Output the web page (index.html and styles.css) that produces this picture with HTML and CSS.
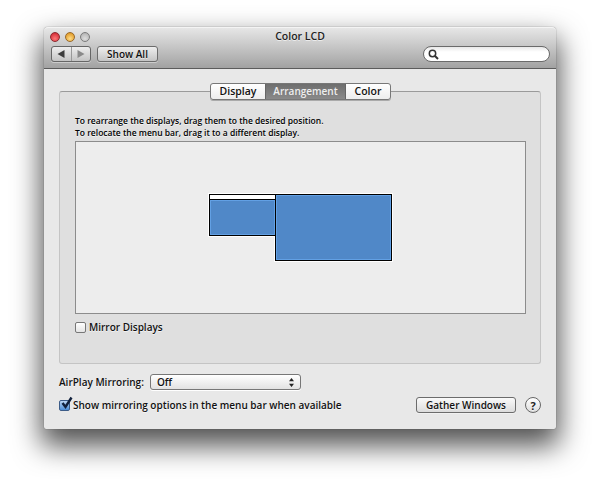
FILE: index.html
```html
<!DOCTYPE html>
<html lang="en">
<head>
<meta charset="utf-8">
<title>Color LCD</title>
<link rel="stylesheet" href="styles.css">
</head>
<body>
<div class="window">
  <header class="titlebar">
    <div class="title-row">
      <div class="lights"><span class="light red"></span><span class="light yellow"></span><span class="light grey"></span></div>
      <div class="title">Color LCD</div>
    </div>
    <div class="toolbar">
      <div class="nav">
        <span class="nav-btn"><svg width="10" height="10" viewBox="0 0 10 10"><path d="M8.5 1V9L1.5 5Z" fill="#3c3c3c"/></svg></span>
        <span class="nav-btn"><svg width="10" height="10" viewBox="0 0 10 10"><path d="M1.5 1V9L8.5 5Z" fill="#8a8a8a"/></svg></span>
      </div>
      <div class="btn showall">Show All</div>
      <div class="search"><svg width="11" height="11" viewBox="0 0 11 11"><circle cx="4.5" cy="4.5" r="3.2" fill="none" stroke="#333" stroke-width="1.5"/><path d="M7 7L10 10" stroke="#333" stroke-width="2"/></svg></div>
    </div>
  </header>
  <main class="content">
    <div class="tabs-wrap">
      <div class="tabs">
        <span class="tab first">Display</span><span class="tab active">Arrangement</span><span class="tab last">Color</span>
      </div>
    </div>
    <section class="panel">
      <p class="hint">To rearrange the displays, drag them to the desired position.<br>To relocate the menu bar, drag it to a different display.</p>
      <div class="arrange">
        <div class="monitors">
          <div class="mon small"><div class="menubar"></div><div class="screen"></div></div>
          <div class="mon large"><div class="screen"></div></div>
        </div>
      </div>
      <label class="check-row mirror"><span class="check"></span>Mirror Displays</label>
    </section>
    <div class="airplay">
      <span class="label">AirPlay Mirroring:</span>
      <div class="select"><span>Off</span><svg width="7" height="11" viewBox="0 0 7 11"><path d="M3.5 1L6 4.2H1Z M3.5 10L6 6.8H1Z" fill="#222"/></svg></div>
    </div>
    <div class="bottom">
      <label class="check-row"><span class="check on"><svg width="15" height="15" viewBox="0 0 15 15"><path d="M3.5 7L6.5 11L12.5 1.5" fill="none" stroke="#10203c" stroke-width="2.4"/></svg></span>Show mirroring options in the menu bar when available</label>
      <div class="btn gather">Gather Windows</div>
      <div class="help">?</div>
    </div>
  </main>
</div>
</body>
</html>
```
FILE: styles.css
```css
* { box-sizing: border-box; }
html, body { margin: 0; height: 490px; overflow: hidden; background: #fff; }
body { padding: 27px 44px 0; font-family: "Open Sans", sans-serif; font-size: 10px; font-weight: 600; color: #111; text-shadow: 0 1px 0 rgba(255,255,255,.6); white-space: nowrap; }
.window { width: 512px; height: 402px; display: flex; flex-direction: column; background: #e8e8e8; border-radius: 4px 4px 2px 2px; box-shadow: 0 0 1px #444, 0 14px 28px 3px rgba(0,0,0,.68); }
.titlebar { height: 42px; flex: none; padding: 0 6px; background: linear-gradient(#e6e6e6, #a2a2a2); border-top: 1px solid #f4f4f4; border-bottom: 1px solid #5c5c5c; border-radius: 4px 4px 0 0; }
.title-row { height: 16px; display: flex; align-items: center; }
.lights { display: flex; gap: 5px; padding-top: 1px; }
.light { width: 10px; height: 10px; border-radius: 50%; border: 1px solid #666; }
.red { background: radial-gradient(circle at 50% 70%, #f77, #c81c28); border-color: #8b2a30; }
.yellow { background: radial-gradient(circle at 50% 70%, #fd8, #d98a10); border-color: #98692a; }
.grey { background: radial-gradient(circle at 50% 70%, #ddd, #aaa); border-color: #7c7c7c; }
.title { flex: 1; text-align: center; margin-left: -40px; margin-top: -1px; color: #222; font-size: 10.5px; }
.toolbar { display: flex; align-items: center; height: 18px; margin-top: 1px; padding-left: 1px; }
.nav { display: flex; width: 40px; height: 16px; border: 1px solid #666; border-radius: 3px; background: linear-gradient(#eee, #c4c4c4); box-shadow: 0 1px 0 rgba(255,255,255,.4); }
.nav-btn { flex: 1; display: flex; align-items: center; justify-content: center; }
.nav-btn + .nav-btn { border-left: 1px solid #999; }
.btn { display: flex; align-items: center; justify-content: center; border: 1px solid #6c6c6c; border-radius: 3px; background: linear-gradient(#fafafa, #dcdcdc); box-shadow: 0 1px 0 rgba(255,255,255,.4); }
.showall { width: 61px; height: 16px; margin-left: 6px; background: linear-gradient(#eee, #c4c4c4); }
.search { width: 127px; height: 16px; margin-left: auto; padding-left: 4px; display: flex; align-items: center; border: 1px solid #6a6a6a; border-radius: 8px; background: linear-gradient(#e8e8e8 0, #fff 5px); }
.content { flex: 1; display: flex; flex-direction: column; padding: 14px 15px 0; }
.tabs-wrap { height: 8px; display: flex; justify-content: center; position: relative; z-index: 1; }
.tabs { display: flex; width: 181px; height: 17px; margin-left: 1px; border: 1px solid #777; border-radius: 3px; background: linear-gradient(#fff, #ededed); box-shadow: 0 1px 0 #aaa; }
.tab { line-height: 14px; text-align: center; font-size: 10.5px; }
.first { width: 54px; }
.last { flex: 1; }
.tab.active { width: 81px; background: linear-gradient(#6e6e6e, #8a8a8a); color: #eee; border-left: 1px solid #666; border-right: 1px solid #666; text-shadow: none; font-size: 10px; }
.panel { height: 273px; flex: none; padding: 23px 15px 0; background: #dfdfdf; border: 1px solid #c4c4c4; border-top-color: #9a9a9a; border-radius: 3px; }
.hint { margin: 0; font-size: 8.5px; font-weight: 600; line-height: 12px; height: 22px; color: #000; }
.arrange { height: 173px; width: 451px; margin-top: 4px; padding-top: 52px; background: #ededed; border: 1px solid #8c8c8c; text-shadow: none; }
.monitors { display: flex; align-items: flex-start; padding-left: 133px; filter: drop-shadow(1px 0 0 #fff) drop-shadow(-1px 0 0 #fff) drop-shadow(0 1px 0 #fff) drop-shadow(0 -1px 0 #fff); }
.mon { display: flex; flex-direction: column; border: 1px solid #000; }
.small { width: 67px; height: 42px; }
.large { width: 117px; height: 67px; margin-left: -1px; }
.menubar { height: 4px; background: #fff; border-bottom: 1px solid #000; box-sizing: content-box; }
.screen { flex: 1; background: #5088c8; border: 1px solid #62a0e4; }
.check-row { display: flex; align-items: center; }
.mirror { margin-top: 6px; gap: 3px; }
.check { width: 11px; height: 11px; flex: none; position: relative; border: 1px solid #777; border-radius: 2px; background: linear-gradient(#fff, #e4e4e4); }
.check.on { background: linear-gradient(#bcd6f4, #4c8ed8); border-color: #3c5c88; }
.check svg { position: absolute; left: -1px; top: -5px; }
.airplay { display: flex; align-items: center; margin-top: 10px; height: 16px; }
.label { width: 91px; flex: none; }
.select { width: 151px; height: 16px; display: flex; align-items: center; justify-content: space-between; padding: 0 5px 0 6px; border: 1px solid #777; border-radius: 3px; background: linear-gradient(#fff, #e2e2e2); box-shadow: 0 1px 0 #fff; }
.bottom { display: flex; align-items: center; margin-top: 6px; height: 18px; }
.bottom .check-row { gap: 3px; flex: 1; }
.gather { width: 100px; height: 16px; }
.help { width: 16px; height: 16px; margin-left: 9px; border: 1px solid #666; border-radius: 50%; display: flex; align-items: center; justify-content: center; background: linear-gradient(#fff, #ddd); font-weight: 700; font-size: 11px; color: #222; }
```
